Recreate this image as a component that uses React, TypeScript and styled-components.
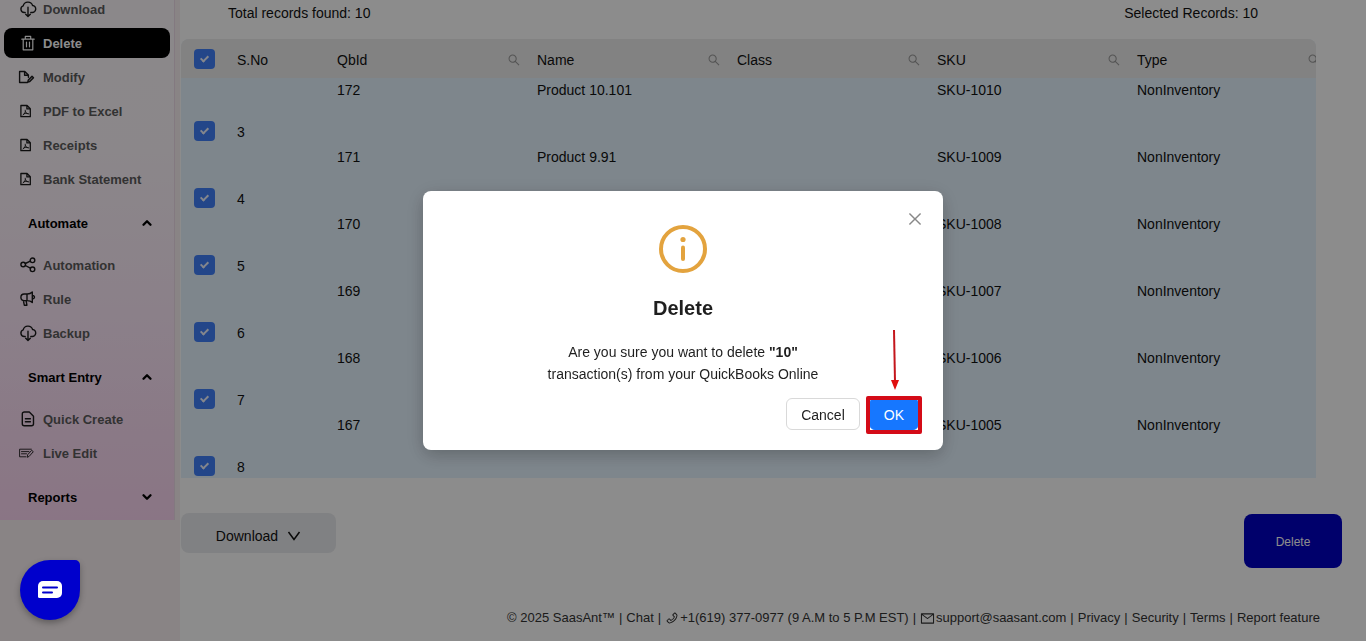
import React from "react";
import styled, { createGlobalStyle } from "styled-components";
import { AiOutlineSearch, AiOutlineClose, AiOutlineMail, AiOutlinePhone } from "react-icons/ai";
import { ChevronDown, ChevronUp } from "lucide-react";

const GlobalStyle = createGlobalStyle`
  * { box-sizing: border-box; }
  body {
    margin: 0;
    background: #fff;
    color: #111;
    font-family: "Liberation Sans", Arial, sans-serif;
    font-size: 14px;
    overflow: hidden;
  }
  button, input { font: inherit; color: inherit; }
  ul { list-style: none; margin: 0; padding: 0; }
  a { color: inherit; text-decoration: none; }
`;

const Page = styled.div`
  display: flex;
  min-height: 100vh;
  overflow: hidden;
`;

const Sidebar = styled.aside`
  flex: none;
  width: 180px;
  background: #f9f0f3;
`;

const Menu = styled.nav`
  margin: -6px 5px 0 0;
  padding: 0 4px;
  border-right: 1px solid #efdce9;
  background: linear-gradient(180deg, #fdf8fc 0%, #fdf6fb 30%, #fdeafa 60%, #fcdcf4 85%, #fbd6f2 100%);
`;

const MenuList = styled.ul`
  display: flex;
  flex-direction: column;
  gap: 4px;
`;

const MenuLink = styled.a<{ $active?: boolean }>`
  display: flex;
  align-items: center;
  gap: 7px;
  height: 30px;
  padding-left: 16px;
  border-radius: 8px;
  font-size: 13px;
  font-weight: 700;
  color: ${(p) => (p.$active ? "#fff" : "#5c5c5c")};
  background: ${(p) => (p.$active ? "#000" : "transparent")};
  svg {
    flex: none;
    width: 16px;
    height: 16px;
    overflow: visible;
    color: ${(p) => (p.$active ? "#fff" : "#1a1a1a")};
  }
`;

const GroupButton = styled.button`
  display: flex;
  align-items: center;
  justify-content: space-between;
  width: 100%;
  height: 48px;
  padding: 2px 16px 0 24px;
  border: 0;
  background: none;
  font-size: 13px;
  font-weight: 700;
  color: #000;
`;

const Main = styled.main`
  flex: 1;
  min-width: 0;
  display: flex;
  flex-direction: column;
`;

const Summary = styled.div`
  display: flex;
  justify-content: space-between;
  height: 39px;
  padding: 3px 108px 0 48px;
  line-height: 20px;
`;

const TableFrame = styled.div`
  height: 439px;
  margin: 0 50px 0 1px;
  overflow: hidden;
  border-radius: 8px 8px 0 0;
  background: #e6f4ff;
`;

const Table = styled.table`
  width: 1148px;
  table-layout: fixed;
  border-collapse: collapse;
  line-height: 16px;
`;

const HeadCell = styled.th<{ $width: number }>`
  width: ${(p) => p.$width}px;
  height: 39px;
  padding: 2px 8px 0;
  background: #ededed;
  text-align: left;
  font-weight: 400;
`;

const HeadContent = styled.div`
  display: flex;
  align-items: center;
  justify-content: space-between;
`;

const SearchButton = styled.button`
  display: flex;
  padding: 0;
  border: 0;
  background: none;
  color: #999;
`;

const PickCell = styled.td`
  height: 67px;
  padding: 0 8px;
  vertical-align: middle;
`;

const ValueCell = styled.td`
  height: 20px;
  padding: 0 8px;
  vertical-align: bottom;
`;

const Checkbox = styled.input.attrs({ type: "checkbox" })`
  appearance: none;
  display: grid;
  place-items: center;
  width: 21px;
  height: 20px;
  margin: 0 5px 2px;
  border-radius: 4px;
  background: #4080fa;
  &::after {
    content: "";
    width: 3px;
    height: 6px;
    margin-bottom: 2px;
    border: solid #f0f4ff;
    border-width: 0 2px 2px 0;
    transform: rotate(45deg);
  }
`;

const Actions = styled.div`
  display: flex;
  justify-content: space-between;
  align-items: flex-start;
  margin-top: 35px;
  padding: 0 24px 0 1px;
`;

const DownloadButton = styled.button`
  display: flex;
  align-items: center;
  justify-content: center;
  gap: 9px;
  width: 155px;
  height: 40px;
  padding-top: 6px;
  border: 0;
  border-radius: 8px;
  background: #eaecee;
`;

const DeleteButton = styled.button`
  width: 98px;
  height: 54px;
  margin-top: 1px;
  padding-top: 2px;
  border: 0;
  border-radius: 8px;
  background: #0000c4;
  color: #fff;
  font-size: 12px;
`;

const Footer = styled.footer`
  display: flex;
  justify-content: flex-end;
  align-items: center;
  gap: 4px;
  margin-top: auto;
  padding: 0 46px 13px 0;
  font-size: 13px;
  line-height: 20px;
  color: #333;
  white-space: nowrap;
  a { display: flex; align-items: center; gap: 1px; }
`;

const Mask = styled.div`
  position: fixed;
  inset: 0;
  display: flex;
  align-items: center;
  justify-content: center;
  background: rgba(0, 0, 0, 0.45);
`;

const Dialog = styled.section`
  position: relative;
  width: 520px;
  padding: 34px 24px 20px;
  border-radius: 8px;
  background: #fff;
  color: #1f1f1f;
  text-align: center;
  box-shadow: 0 6px 16px rgba(0, 0, 0, 0.1), 0 4px 20px rgba(0, 0, 0, 0.15);
`;

const InfoIcon = styled.svg`
  display: block;
  margin: 0 auto;
`;

const DialogTitle = styled.h2`
  margin: 21px 0 19px;
  font-size: 20px;
  line-height: 28px;
  font-weight: 700;
`;

const DialogText = styled.p`
  margin: 0 auto;
  line-height: 22px;
`;

const DialogButtons = styled.div`
  display: flex;
  justify-content: flex-end;
  gap: 9px;
  margin-top: 13px;
`;

const DialogButton = styled.button<{ $primary?: boolean }>`
  height: 32px;
  padding: 2px 14px 0;
  border: 1px solid ${(p) => (p.$primary ? "#1677ff" : "#d9d9d9")};
  border-radius: 6px;
  background: ${(p) => (p.$primary ? "#1677ff" : "#fff")};
  color: ${(p) => (p.$primary ? "#fff" : "#1f1f1f")};
`;

const Highlighted = styled.div`
  position: relative;
  display: flex;
  &::after {
    content: "";
    position: absolute;
    inset: -2px -3px -4px;
    border: 4px solid #d40b17;
    border-radius: 2px;
    pointer-events: none;
  }
`;

const Arrow = styled.svg`
  position: absolute;
  right: 18px;
  bottom: 100%;
  width: 12px;
  height: 62px;
  margin-bottom: 7px;
`;

const CloseButton = styled.button`
  position: absolute;
  top: 19px;
  right: 19px;
  display: flex;
  padding: 0;
  border: 0;
  background: none;
  color: #888;
`;

const ChatButton = styled.button`
  position: fixed;
  left: 20px;
  bottom: 21px;
  display: grid;
  place-items: center;
  width: 60px;
  height: 60px;
  border: 0;
  border-radius: 50% 5px 50% 50%;
  background: #0000cc;
  box-shadow: 0 3px 6px rgba(0, 0, 0, 0.3);
`;

const LineIcon = styled.svg.attrs({
  viewBox: "0 0 16 16",
  fill: "none",
  stroke: "currentColor",
  strokeLinejoin: "round",
  strokeLinecap: "round",
})`
  stroke-width: 1.4px;
`;

const CloudIcon = () => (
  <LineIcon>
    <path d="M5.200 11.500H4.200A3.400 3.400 0 0 1 3.200 4.900 4.900 4.900 0 0 1 12.600 4.500 3.500 3.500 0 0 1 11.800 11.500H10.800M8 6.200v9M5.700 13.200l2.300 2.300 2.300-2.300" />
  </LineIcon>
);

const TrashIcon = () => (
  <LineIcon>
    <path
      d="M1.800 4.200h12.400M5.300 4V1.400h5.400V4M3.200 4.200v10.600h9.600V4.200M6.500 7v4.800M9.500 7v4.800"
      strokeWidth="1.200"
    />
  </LineIcon>
);

const FileEditIcon = () => (
  <LineIcon>
    <path d="M7.500 13.500H-.4V2.500H4.800L8.400 6v2.200M4.600 2.700v3.500h3.600" />
    <path d="M7.800 13l.5-2.100 3.700-3.700 1.500 1.500-3.700 3.800z" fill="currentColor" fillOpacity=".3" />
  </LineIcon>
);

const PdfIcon = () => (
  <LineIcon>
    <path d="M.9 2.500h6.200l3.200 3.200v8H.9zM6.900 2.700v3.200h3.200" strokeWidth="1.300" />
    <path d="M5.300 7.200c.4 2-.7 4-2.300 4.800M5.500 8.600c.4 1.200 1.500 2.200 3 2.300M3.600 11c1.400-.7 2.900-.8 4.500-.4" strokeWidth=".9" />
  </LineIcon>
);

const ShareIcon = () => (
  <LineIcon>
    <circle cx="3.200" cy="7.500" r="2.300" />
    <circle cx="12.500" cy="3.300" r="2.300" />
    <circle cx="12.500" cy="12.300" r="2.300" />
    <path d="M5.300 6.500l5-2.300M5.300 8.500l5.100 2.700" />
  </LineIcon>
);

const MegaphoneIcon = () => (
  <LineIcon>
    <path d="M12.300 1v10.500C10.800 10 9 9.600 7.300 9.600H4.200a3.200 3.200 0 0 1 0-6.600h3.100c1.700 0 3.500-.5 5-2zM7 3.200V9.600M12.500 4.500c2.600-.3 2.600 3.500 0 3.200M3.400 9.600l.9 4.600h2.600L6.100 9.600" />
  </LineIcon>
);

const DocumentIcon = () => (
  <LineIcon>
    <path d="M4.300 1h5l4.200 4.200v7.600a2 2 0 0 1-2 2H4.300a2 2 0 0 1-2-2V3a2 2 0 0 1 2-2zM5.400 7.700h5M5.400 10.700h5" />
  </LineIcon>
);

const LiveEditIcon = () => (
  <LineIcon>
    <path
      d="M5.800 11.800H-.4V4.200h11.700M1.500 6.600h7.400M1.500 8.800h5M7.200 11.900l.5-2.200 4-4.400 1.600 1.400-4 4.500z"
      strokeWidth=".9"
    />
  </LineIcon>
);

type Item = { label: string; icon: React.ReactNode; active?: boolean };
type Group = { title?: string; open?: boolean; items: Item[] };

const groups: Group[] = [
  {
    items: [
      { label: "Download", icon: <CloudIcon /> },
      { label: "Delete", icon: <TrashIcon />, active: true },
      { label: "Modify", icon: <FileEditIcon /> },
      { label: "PDF to Excel", icon: <PdfIcon /> },
      { label: "Receipts", icon: <PdfIcon /> },
      { label: "Bank Statement", icon: <PdfIcon /> },
    ],
  },
  {
    title: "Automate",
    open: true,
    items: [
      { label: "Automation", icon: <ShareIcon /> },
      { label: "Rule", icon: <MegaphoneIcon /> },
      { label: "Backup", icon: <CloudIcon /> },
    ],
  },
  {
    title: "Smart Entry",
    open: true,
    items: [
      { label: "Quick Create", icon: <DocumentIcon /> },
      { label: "Live Edit", icon: <LiveEditIcon /> },
    ],
  },
  { title: "Reports", items: [] },
];

const columns = ["QbId", "Name", "Class", "SKU", "Type"];

const rows = [
  { no: 3, id: "171", name: "Product 9.91", sku: "SKU-1009" },
  { no: 4, id: "170", name: "", sku: "SKU-1008" },
  { no: 5, id: "169", name: "", sku: "SKU-1007" },
  { no: 6, id: "168", name: "", sku: "SKU-1006" },
  { no: 7, id: "167", name: "", sku: "SKU-1005" },
  { no: 8, id: "", name: "", sku: "" },
];

export default function App() {
  return (
    <>
      <GlobalStyle />
      <Page>
        <Sidebar>
          <Menu>
            <MenuList>
              {groups.map((group, i) => (
                <React.Fragment key={i}>
                  {group.title && (
                    <li>
                      <GroupButton aria-expanded={!!group.open}>
                        {group.title}
                        {group.open ? <ChevronUp size={14} strokeWidth={4} /> : <ChevronDown size={14} strokeWidth={4} />}
                      </GroupButton>
                    </li>
                  )}
                  {group.items.map((item) => (
                    <li key={item.label}>
                      <MenuLink href="#" $active={item.active}>
                        {item.icon}
                        {item.label}
                      </MenuLink>
                    </li>
                  ))}
                </React.Fragment>
              ))}
            </MenuList>
          </Menu>
        </Sidebar>
        <Main>
          <Summary>
            <span>Total records found: 10</span>
            <span>Selected Records: 10</span>
          </Summary>
          <TableFrame>
            <Table>
              <thead>
                <tr>
                  <HeadCell $width={48}>
                    <Checkbox defaultChecked aria-label="Select all rows" />
                  </HeadCell>
                  <HeadCell $width={100}>S.No</HeadCell>
                  {columns.map((name) => (
                    <HeadCell key={name} $width={200}>
                      <HeadContent>
                        {name}
                        <SearchButton aria-label={`Search ${name}`}>
                          <AiOutlineSearch size={14} />
                        </SearchButton>
                      </HeadContent>
                    </HeadCell>
                  ))}
                </tr>
              </thead>
              <tbody>
                <tr>
                  <ValueCell />
                  <ValueCell />
                  <ValueCell>172</ValueCell>
                  <ValueCell>Product 10.101</ValueCell>
                  <ValueCell />
                  <ValueCell>SKU-1010</ValueCell>
                  <ValueCell>NonInventory</ValueCell>
                </tr>
                {rows.map((row) => (
                  <tr key={row.no}>
                    <PickCell>
                      <Checkbox defaultChecked aria-label={`Select row ${row.no}`} />
                    </PickCell>
                    <PickCell>{row.no}</PickCell>
                    <ValueCell>{row.id}</ValueCell>
                    <ValueCell>{row.name}</ValueCell>
                    <ValueCell />
                    <ValueCell>{row.sku}</ValueCell>
                    <ValueCell>{row.sku && "NonInventory"}</ValueCell>
                  </tr>
                ))}
              </tbody>
            </Table>
          </TableFrame>
          <Actions>
            <DownloadButton>
              Download
              <svg width="14" height="12" viewBox="0 0 14 12" fill="none" stroke="currentColor" strokeWidth="1.500">
                <path d="M1.500 2L7 9.500 12.500 2" />
              </svg>
            </DownloadButton>
            <DeleteButton>Delete</DeleteButton>
          </Actions>
          <Footer>
            <span>© 2025 SaasAnt™</span>|<a href="#">Chat</a>|
            <a href="#">
              <AiOutlinePhone size={14} />
              +1(619) 377-0977 (9 A.M to 5 P.M EST)
            </a>
            |
            <a href="#">
              <AiOutlineMail size={15} />
              support@saasant.com
            </a>
            |<a href="#">Privacy</a>|<a href="#">Security</a>|<a href="#">Terms</a>|<a href="#">Report feature</a>
          </Footer>
        </Main>
      </Page>
      <Mask>
        <Dialog role="dialog" aria-modal="true" aria-labelledby="dialog-title">
          <CloseButton aria-label="Close">
            <AiOutlineClose size={18} />
          </CloseButton>
          <InfoIcon width="48" height="48" viewBox="0 0 48 48" fill="none" stroke="#e3a33e" strokeWidth="4" strokeLinecap="round">
            <circle cx="24" cy="24" r="22" />
            <path d="M24 22.500v11.500" />
            <circle cx="24" cy="14.500" r="2.600" fill="#e3a33e" stroke="none" />
          </InfoIcon>
          <DialogTitle id="dialog-title">Delete</DialogTitle>
          <DialogText>
            Are you sure you want to delete <strong>"10"</strong>
            <br />
            transaction(s) from your QuickBooks Online
          </DialogText>
          <DialogButtons>
            <DialogButton>Cancel</DialogButton>
            <Highlighted>
              <DialogButton $primary>OK</DialogButton>
              <Arrow viewBox="0 0 12 62">
                <path d="M5 1l1 52" stroke="#c4161c" strokeWidth="2" />
                <path d="M2 51h8l-4 10z" fill="#e01010" />
              </Arrow>
            </Highlighted>
          </DialogButtons>
        </Dialog>
      </Mask>
      <ChatButton aria-label="Open chat">
        <svg width="24" height="18" viewBox="0 0 24 18">
          <path d="M5 0h14a5 5 0 0 1 5 5v7a5 5 0 0 1-5 5H1.500A1.500 1.500 0 0 1 0 15.500V5a5 5 0 0 1 5-5z" fill="#fff" />
          <path d="M5 6.500h14M5 11.500h9" stroke="#0000cc" strokeWidth="2" strokeLinecap="round" />
        </svg>
      </ChatButton>
    </>
  );
}
